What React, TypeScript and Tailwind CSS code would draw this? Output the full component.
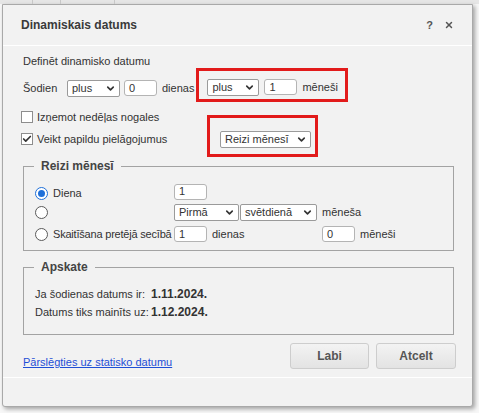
import { ChevronDown, Check, X } from 'lucide-react'

const font = { fontFamily: '"Liberation Sans", Arial, sans-serif' }

function Select({ value, w }: { value: string; w: string }) {
  return (
    <div className={`${w} h-[17px] flex items-center justify-between bg-white border border-[#9a9a9a] rounded-[2px] pl-[4px] pr-[3px] text-[#333]`}>
      <span className="leading-none whitespace-nowrap">{value}</span>
      <ChevronDown size={11} strokeWidth={3.5} className="text-[#333]" />
    </div>
  )
}

function Input({ value, className = '' }: { value: string; className?: string }) {
  return (
    <div className={`w-[33px] h-[16px] flex items-center bg-white border border-[#b4b4b4] rounded-[3px] pl-[4px] text-[#333] ${className}`}>
      {value}
    </div>
  )
}

function Checkbox({ checked }: { checked?: boolean }) {
  return (
    <div className="w-[12px] h-[12px] bg-white border border-[#8d8d8d] flex items-center justify-center">
      {checked && <Check size={10} strokeWidth={4} className="text-[#333]" />}
    </div>
  )
}

function Radio({ checked }: { checked?: boolean }) {
  return checked ? (
    <div className="w-[13px] h-[13px] rounded-full border-[1.5px] border-[#1e6fd9] bg-white flex items-center justify-center">
      <div className="w-[7px] h-[7px] rounded-full bg-[#1e6fd9]" />
    </div>
  ) : (
    <div className="w-[13px] h-[13px] rounded-full border border-[#5a5a5a] bg-white" />
  )
}

function Legend({ text }: { text: string }) {
  return (
    <div className="-mt-[8px] ml-[10px] px-[7px] w-fit h-[15px] leading-[15px] bg-[#f2f2f2] font-bold text-[12px] text-[#444]">
      {text}
    </div>
  )
}

export default function App() {
  return (
    <div className="w-[479px] h-[413px] bg-[#f7f7f7] overflow-hidden text-[11px] text-[#333]" style={font}>
      {/* tab strip behind the dialog */}
      <div className="h-[4px] flex bg-[#e6e6e6]">
        <div className="w-[33px] border-r border-[#c8c8c8]" />
        <div className="w-[28px] border-r border-[#c8c8c8]" />
        <div className="w-[54px] border-r border-[#c8c8c8]" />
      </div>

      <div className="ml-[2px] w-[471px] h-[403px] flex flex-col bg-[#f2f2f2] border border-[#a9a9a9] rounded-b-[3px] shadow-[2px_2px_4px_rgba(0,0,0,0.35)]">
        {/* Header */}
        <div className="h-[41px] flex items-center justify-between pl-[18px] pr-[18px] border-b border-white">
          <span className="font-bold text-[12px] text-[#3a3a3a]">Dinamiskais datums</span>
          <div className="flex items-center gap-[11px] text-[#555]">
            <span className="font-bold text-[11px]">?</span>
            <X size={10} strokeWidth={3.5} />
          </div>
        </div>

        {/* Body */}
        <div className="pl-[20px] pr-[15px] flex flex-col">
          <div className="mt-[8px] h-[14px] leading-[14px]">Definēt dinamisko datumu</div>

          <div className="flex items-center h-[40px]">
            <span className="w-[44px]">Šodien</span>
            <Select value="plus" w="w-[53px]" />
            <Input value="0" className="ml-[4px]" />
            <span className="ml-[5px]">dienas</span>
            <div className="self-start ml-[2px] h-[34px] border-[3px] border-[#e21b1b] flex items-center gap-[5px] pl-[8px] pr-[7px] pt-[4px]">
              <Select value="plus" w="w-[52px]" />
              <Input value="1" />
              <span>mēneši</span>
            </div>
          </div>

          <div className="flex items-center h-[18px] gap-[4px] -ml-[2px]">
            <Checkbox />
            <span>Izņemot nedēļas nogales</span>
          </div>

          <div className="flex items-center h-[26px] -ml-[2px]">
            <div className="w-[199px] flex items-center gap-[4px]">
              <Checkbox checked />
              <span>Veikt papildu pielāgojumus</span>
            </div>
            <div className="relative">
              <div className="absolute -left-[13px] -right-[7px] -top-[16px] -bottom-[9px] border-[3px] border-[#e21b1b]" />
              <Select value="Reizi mēnesī" w="w-[91px]" />
            </div>
          </div>

          {/* Reizi mēnesī */}
          <div className="mt-[14px] w-[431px] h-[85px] border border-[#a3a3a3] flex flex-col">
            <Legend text="Reizi mēnesī" />
            <div className="pl-[11px] flex flex-col">
              <div className="mt-[9px] h-[20px] flex items-center">
                <div className="w-[139px] flex items-center gap-[5px]">
                  <Radio checked />
                  <span>Diena</span>
                </div>
                <Input value="1" className="-mt-[3px]" />
              </div>
              <div className="h-[18px] flex items-center">
                <div className="w-[139px] flex items-center">
                  <Radio />
                </div>
                <div className="w-[148px] flex items-center gap-[1px]">
                  <Select value="Pirmā" w="w-[65px]" />
                  <Select value="svētdienā" w="w-[77px]" />
                </div>
                <span>mēneša</span>
              </div>
              <div className="mt-[3px] h-[20px] flex items-center">
                <div className="w-[139px] flex items-center gap-[5px]">
                  <Radio />
                  <span className="whitespace-nowrap tracking-[-0.2px]">Skaitīšana pretējā secībā</span>
                </div>
                <div className="w-[148px] flex items-center gap-[5px]">
                  <Input value="1" />
                  <span>dienas</span>
                </div>
                <Input value="0" />
                <span className="ml-[5px]">mēneši</span>
              </div>
            </div>
          </div>

          {/* Apskate */}
          <div className="mt-[16px] w-[431px] h-[68px] border border-[#a3a3a3] flex flex-col">
            <Legend text="Apskate" />
            <div className="pl-[11px] flex flex-col">
              <div className="mt-[11px] h-[16px] flex items-center">
                <span className="w-[116px]">Ja šodienas datums ir:</span>
                <span className="font-bold text-[12px]">1.11.2024.</span>
              </div>
              <div className="mt-[2px] h-[16px] flex items-center">
                <span className="w-[116px]">Datums tiks mainīts uz:</span>
                <span className="font-bold text-[12px]">1.12.2024.</span>
              </div>
            </div>
          </div>

          <div className="mt-[8px] h-[26px] flex items-end justify-between">
            <a href="#" className="leading-[14px] text-[#1f4fd6] underline">
              Pārslēgties uz statisko datumu
            </a>
            <div className="flex gap-[7px] pr-[1px]">
              <button className="w-[79px] h-[26px] rounded-[3px] border border-[#cdcdcd] bg-gradient-to-b from-[#f3f3f3] to-[#e3e3e3] font-bold text-[12px] text-[#555]">
                Labi
              </button>
              <button className="w-[80px] h-[26px] rounded-[3px] border border-[#cdcdcd] bg-gradient-to-b from-[#f3f3f3] to-[#e3e3e3] font-bold text-[12px] text-[#555]">
                Atcelt
              </button>
            </div>
          </div>
        </div>
        <div className="mt-[8px] border-t border-white" />
      </div>
    </div>
  )
}
